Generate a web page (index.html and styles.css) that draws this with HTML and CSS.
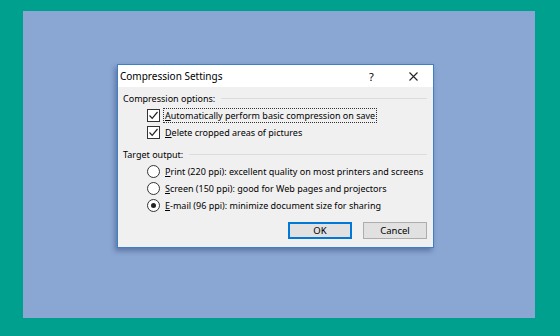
FILE: index.html
```html
<!DOCTYPE html>
<html>
<head>
<meta charset="utf-8">
<link rel="stylesheet" href="styles.css">
</head>
<body>
<div class="desktop">
  <div class="dialog">
    <div class="titlebar">
      <span class="title">Compression Settings</span>
      <span class="help">?</span>
      <svg class="close" width="9" height="9" viewBox="0 0 9 9"><path d="M0.5 0.5L8.5 8.5M8.5 0.5L0.5 8.5" stroke="#222" stroke-width="1.1"/></svg>
    </div>
    <div class="body">
      <div class="group"><span>Compression options:</span><i class="rule"></i></div>
      <div class="opt"><span class="cb"><svg width="11" height="11" viewBox="0 0 11 11"><path d="M1.5 5.5L4.2 8.3L9.5 2" fill="none" stroke="#222" stroke-width="1.2"/></svg></span><span class="focus"><u>A</u>utomatically perform basic compression on save</span></div>
      <div class="opt"><span class="cb"><svg width="11" height="11" viewBox="0 0 11 11"><path d="M1.5 5.5L4.2 8.3L9.5 2" fill="none" stroke="#222" stroke-width="1.2"/></svg></span><span class="lbl"><u>D</u>elete cropped areas of pictures</span></div>
      <div class="group g2"><span>Target output:</span><i class="rule"></i></div>
      <div class="opt"><span class="rb"></span><span class="lbl"><u>P</u>rint (220 ppi): excellent quality on most printers and screens</span></div>
      <div class="opt"><span class="rb"></span><span class="lbl"><u>S</u>creen (150 ppi): good for Web pages and projectors</span></div>
      <div class="opt"><span class="rb on"></span><span class="lbl"><u>E</u>-mail (96 ppi): minimize document size for sharing</span></div>
      <div class="buttons">
        <button class="btn default">OK</button>
        <button class="btn">Cancel</button>
      </div>
    </div>
  </div>
</div>
</body>
</html>
```
FILE: styles.css
```css
html, body { margin: 0; padding: 0; }
body {
  background: #00a08f;
  width: 560px;
  height: 336px;
  overflow: hidden;
  font-family: "Noto Sans", "Open Sans", sans-serif;
  font-size: 9px;
  color: #000;
  white-space: nowrap;
}
.desktop {
  margin: 11px 25px 0 23px;
  height: 307px;
  background: #8aa6d2;
  padding: 53px 0 0 94px;
  box-sizing: border-box;
}
.dialog {
  width: 317px;
  height: 184px;
  box-sizing: border-box;
  border: 1px solid #3f7fc6;
  background: #f0f0f0;
  box-shadow: -2px 3px 5px rgba(40, 60, 110, 0.45);
  display: flex;
  flex-direction: column;
}
.titlebar {
  height: 22px;
  background: #fff;
  display: flex;
  align-items: center;
  padding-left: 2px;
  font-size: 10px;
}
.title { flex: 1; }
.help { width: 8px; margin-right: 32px; font-size: 11px; }
.close { margin-right: 15px; }
.body {
  padding: 3px 6px 0 5px;
  display: flex;
  flex-direction: column;
}
.group {
  height: 17px;
  display: flex;
  align-items: center;
}
.group.g2 { margin-top: 5px; }
.rule {
  flex: 1;
  height: 1px;
  background: #dcdcdc;
  margin-left: 6px;
}
.opt {
  height: 17px;
  display: flex;
  align-items: center;
  padding-left: 24px;
}
.cb {
  width: 13px;
  height: 13px;
  box-sizing: border-box;
  border: 1px solid #333;
  background: #fff;
  display: flex;
  align-items: center;
  justify-content: center;
}
.rb {
  width: 13px;
  height: 13px;
  box-sizing: border-box;
  border: 1px solid #333;
  border-radius: 50%;
  background: #fff;
  display: flex;
  align-items: center;
  justify-content: center;
}
.rb.on::after {
  content: "";
  width: 5px;
  height: 5px;
  border-radius: 50%;
  background: #222;
}
.lbl { margin-left: 5px; }
.focus {
  margin-left: 4px;
  padding: 0 1px;
  outline: 1px dotted #333;
  line-height: 13px;
}
.buttons {
  margin-top: 8px;
  display: flex;
  justify-content: flex-end;
  gap: 11px;
}
.btn {
  width: 64px;
  height: 17px;
  box-sizing: border-box;
  background: #e1e1e1;
  border: 1px solid #adadad;
  font-family: inherit;
  font-size: 9.5px;
  color: #000;
  padding: 0;
}
.btn.default {
  border-color: #0078d7;
  box-shadow: inset 0 0 0 1px #0078d7;
}
```
